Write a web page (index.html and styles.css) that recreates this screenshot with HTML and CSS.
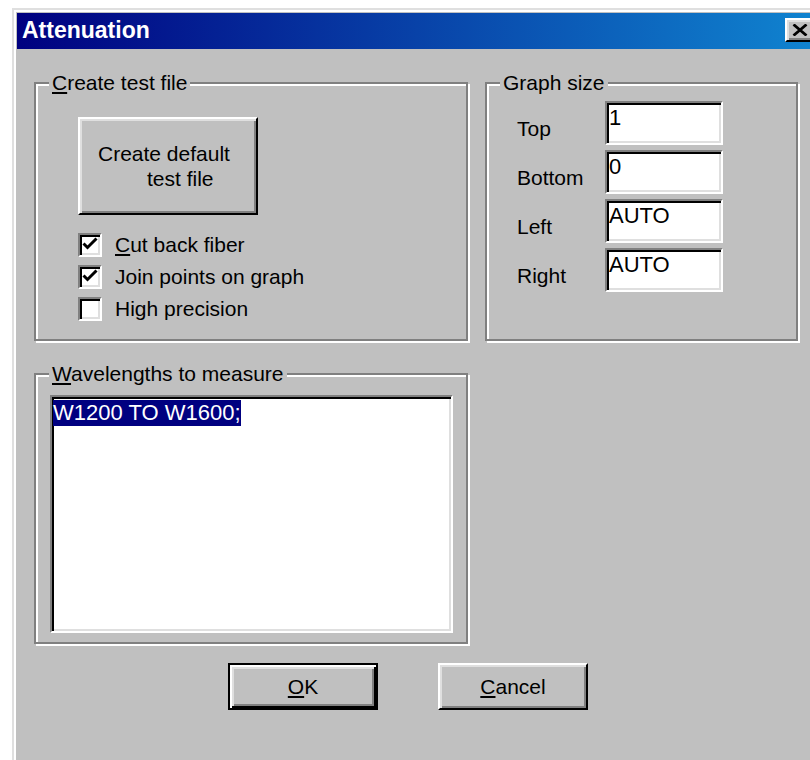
FILE: index.html
```html
<!DOCTYPE html>
<html lang="en">
<head>
<meta charset="utf-8">
<title>Attenuation</title>
<link rel="stylesheet" href="styles.css">
</head>
<body>
<div class="window">
  <div class="titlebar">
    <span class="title">Attenuation</span>
    <button class="close" type="button" aria-label="Close">
      <svg width="16" height="12" viewBox="0 0 16 12"><path d="M1.5 0.5 L14.5 11.5 M14.5 0.5 L1.5 11.5" stroke="#000" stroke-width="2.8" fill="none"/></svg>
    </button>
  </div>

  <div class="panel">
    <div class="top-row">
      <div class="group create">
        <span class="caption"><u>C</u>reate test file</span>
        <button class="btn big" type="button">
          <span>Create default</span>
          <span class="indent">test file</span>
        </button>
        <div class="checks">
          <label class="check">
            <span class="box"><svg width="16" height="16" viewBox="0 0 16 16"><path d="M1.5 6.5 L5.5 10.5 L14.5 1.5" stroke="#000" stroke-width="3" fill="none"/></svg></span>
            <span><u>C</u>ut back fiber</span>
          </label>
          <label class="check">
            <span class="box"><svg width="16" height="16" viewBox="0 0 16 16"><path d="M1.5 6.5 L5.5 10.5 L14.5 1.5" stroke="#000" stroke-width="3" fill="none"/></svg></span>
            <span>Join points on graph</span>
          </label>
          <label class="check">
            <span class="box"></span>
            <span>High precision</span>
          </label>
        </div>
      </div>

      <div class="group graph">
        <span class="caption">Graph size</span>
        <div class="fields">
          <span class="field-label">Top</span>
          <div class="edit">1</div>
          <span class="field-label">Bottom</span>
          <div class="edit">0</div>
          <span class="field-label">Left</span>
          <div class="edit">AUTO</div>
          <span class="field-label">Right</span>
          <div class="edit">AUTO</div>
        </div>
      </div>
    </div>

    <div class="group wave">
      <span class="caption"><u>W</u>avelengths to measure</span>
      <div class="memo"><span class="sel">W1200 TO W1600;</span></div>
    </div>

    <div class="actions">
      <button class="btn default" type="button"><u>O</u>K</button>
      <button class="btn" type="button"><u>C</u>ancel</button>
    </div>
  </div>
</div>
</body>
</html>
```

FILE: styles.css
```css
* {
  box-sizing: border-box;
}

html,
body {
  margin: 0;
  height: 100%;
  overflow: hidden;
}

body {
  background: #fff;
  color: #000;
  font-family: "Liberation Sans", Arial, sans-serif;
  font-size: 21px;
}

/* dialog frame */
.window {
  width: 808px;
  height: 780px;
  margin: 8px 0 0 12px;
  padding: 3px 3px 0 3px;
  background: #c0c0c0;
  border-left: 2px solid #dfdfdf;
  border-top: 2px solid #dfdfdf;
  box-shadow: inset 2px 2px #fff;
}

.titlebar {
  height: 36px;
  display: flex;
  align-items: center;
  justify-content: space-between;
  padding: 0 2px 2px 5px;
  background: linear-gradient(90deg, #000080, #1084d0);
}

.title {
  color: #fff;
  font-weight: bold;
  font-size: 23px;
  line-height: 1;
}

.close {
  width: 30px;
  height: 24px;
  padding: 0;
  display: flex;
  align-items: center;
  justify-content: center;
  background: #c0c0c0;
  border: 2px solid;
  border-color: #fff #000 #000 #fff;
  box-shadow: inset 2px 2px #dfdfdf, inset -2px -2px #808080;
}

.close svg {
  display: block;
}

.panel {
  padding: 33px 17px 0 17px;
}

.top-row {
  display: flex;
  gap: 17px;
}

/* etched group frame */
.group {
  border: 2px solid #808080;
  box-shadow: inset 2px 2px #fff, 2px 2px #fff;
  padding: 0 13px;
}

.caption {
  display: block;
  width: max-content;
  margin-top: -13px;
  padding: 0 3px;
  line-height: 24px;
  background: #c0c0c0;
}

.create {
  width: 434px;
  padding-bottom: 18px;
}

.graph {
  width: 313px;
}

/* raised push buttons */
.btn {
  font: inherit;
  color: #000;
  width: 150px;
  height: 47px;
  padding: 0;
  background: #c0c0c0;
  border: 2px solid;
  border-color: #fff #000 #000 #fff;
  box-shadow: inset 2px 2px #dfdfdf, inset -2px -2px #808080;
}

.btn.big {
  width: 180px;
  height: 98px;
  margin: 22px 0 0 29px;
  padding: 0 0 0 18px;
  display: flex;
  flex-direction: column;
  justify-content: center;
  align-items: flex-start;
  line-height: 25px;
}

.indent {
  padding-left: 49px;
}

.btn.default {
  border: 2px solid #000;
  box-shadow:
    inset 2px 2px #fff,
    inset -2px -2px #000,
    inset 4px 4px #dfdfdf,
    inset -4px -4px #808080;
}

/* check boxes */
.checks {
  margin: 18px 0 0 29px;
  display: flex;
  flex-direction: column;
  gap: 8px;
}

.check {
  display: flex;
  align-items: center;
  gap: 13px;
  height: 24px;
  line-height: 24px;
}

.box {
  width: 24px;
  height: 24px;
  padding: 2px;
  flex: none;
  background: #fff;
  border: 2px solid;
  border-color: #808080 #fff #fff #808080;
  box-shadow: inset 2px 2px #000, inset -2px -2px #dfdfdf;
}

.box svg {
  display: block;
}

/* edit fields */
.fields {
  margin-top: 6px;
  display: grid;
  grid-template-columns: 105px 118px;
  row-gap: 5px;
}

.field-label {
  padding: 16px 0 0 17px;
  line-height: 24px;
}

.edit,
.memo {
  background: #fff;
  border: 2px solid;
  border-color: #808080 #fff #fff #808080;
  box-shadow: inset 2px 2px #000, inset -2px -2px #dfdfdf;
  font-size: 22px;
  line-height: 26px;
}

.edit {
  height: 44px;
  padding: 2px 0 0 2px;
}

.wave {
  width: 434px;
  margin-top: 32px;
  padding-bottom: 9px;
}

.memo {
  width: 403px;
  height: 238px;
  margin: 9px 0 0 1px;
  padding: 3px 1px;
}

.sel {
  display: inline-block;
  line-height: 26px;
  background: #000080;
  color: #fff;
}

.actions {
  display: flex;
  gap: 60px;
  margin-top: 19px;
  padding-left: 194px;
}
```
